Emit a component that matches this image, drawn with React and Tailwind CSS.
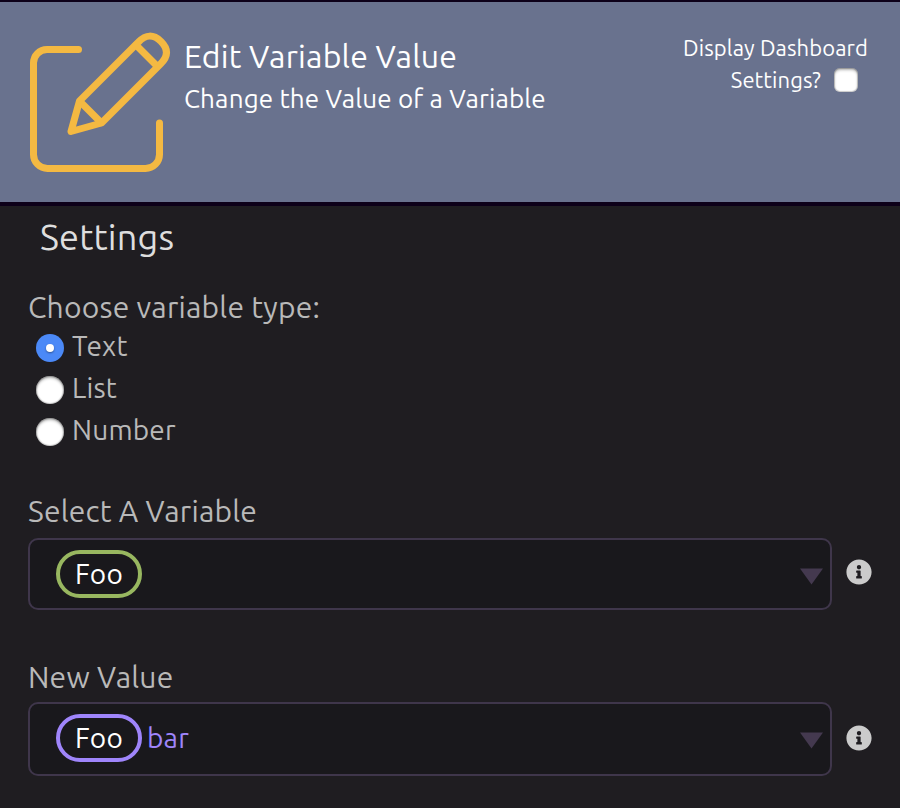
import React from "react";

function EditIcon() {
  return (
    <svg width="144" height="144" viewBox="28 30 144 144" className="block shrink-0" fill="none" stroke="#f4b942" strokeWidth="7" strokeLinecap="round" strokeLinejoin="round">
      <path d="M78.500 49.500H47A13.500 13.500 0 0 0 33.500 63V154.500A14 14 0 0 0 47.500 168.500H145.500A14 14 0 0 0 159.500 154.500V123" />
      <path d="M79.500 101 138.500 42Q149.500 30.500 161 41.500Q172 52.500 160.500 64L101.500 123 71 131.500Z" />
      <path d="M80 101.500 101 122.500M136 45 156.500 65.500" />
    </svg>
  );
}

function InfoIcon() {
  return (
    <svg width="26" height="26" viewBox="0 0 512 512" className="block shrink-0" fill="#cbcbcb">
      <path fillRule="evenodd" d="M256 8C119 8 8 119 8 256s111 248 248 248 248-111 248-248S393 8 256 8zm0 110c23.200 0 42 18.800 42 42s-18.800 42-42 42-42-18.800-42-42 18.800-42 42-42zm56 254c0 6.600-5.400 12-12 12h-88c-6.600 0-12-5.400-12-12v-24c0-6.600 5.400-12 12-12h12v-64h-12c-6.600 0-12-5.400-12-12v-24c0-6.600 5.400-12 12-12h64c6.600 0 12 5.400 12 12v100h12c6.600 0 12 5.400 12 12v24z" />
    </svg>
  );
}

function Radio({ label, checked }) {
  return (
    <label className="flex h-[42px] items-center">
      <span className={checked ? "mt-[3px] flex size-7 items-center justify-center rounded-full bg-[#4b89f7]" : "mt-[3px] size-7 rounded-full bg-white shadow-[inset_0_2px_3px_rgba(0,0,0,0.3),inset_0_0_1px_1px_rgba(0,0,0,0.2)]"}>
        {checked && <span className="size-2 rounded-full bg-white shadow-[0_1px_2px_rgba(0,0,0,0.4)]" />}
      </span>
      <span className="ml-2 text-[28px]">{label}</span>
    </label>
  );
}

function Field({ box, pill, info, children }) {
  return (
    <div className="flex items-center">
      <div className={`flex w-[804px] items-center rounded-[10px] border-2 border-[#3f364b] bg-[#19181c] pl-[26px] pr-[6px] ${box}`}>
        <span className={`flex h-12 w-[86px] items-center justify-center rounded-full border-4 text-[28px] leading-none text-white ${pill}`}>Foo</span>
        {children}
        <svg width="24" height="17" viewBox="0 0 24 17" className="ml-auto mt-1 block">
          <path d="M0 0.500H23L11.500 16.500Z" fill="#44394f" />
        </svg>
      </div>
      <div className={`ml-[14px] ${info}`}>
        <InfoIcon />
      </div>
    </div>
  );
}

export default function App() {
  return (
    <div className="flex h-[808px] w-[900px] flex-col overflow-hidden whitespace-nowrap bg-[#1f1d21] font-[Ubuntu,'Noto_Sans',sans-serif] tracking-[0.2px] text-[#b9b9b9]">
      <header className="flex h-[206px] shrink-0 border-t-2 border-b-4 border-[#0d0019] bg-[#69728e] pl-7 pt-7 text-white">
        <EditIcon />
        <div className="ml-3 pt-1">
          <h1 className="text-[32px] leading-[44px]">Edit Variable Value</h1>
          <p className="mt-px text-[26px] leading-[40px] tracking-[0.17px]">Change the Value of a Variable</p>
        </div>
        <div className="ml-auto mr-8 flex flex-col items-end pt-[2px] text-[22px] leading-8 tracking-[0.1px]">
          <span>Display Dashboard</span>
          <span className="mr-[10px] flex items-center">
            Settings?
            <span className="ml-[13px] size-6 rounded-[6px] bg-white shadow-[inset_0_2px_3px_rgba(0,0,0,0.3),inset_0_0_1px_1px_rgba(0,0,0,0.2)]" />
          </span>
        </div>
      </header>
      <main className="flex flex-col items-start pl-7">
        <h2 className="ml-3 mt-[7px] text-[36px] leading-[48px] text-[#dedede]">Settings</h2>
        <p className="mt-[26px] text-[30px] leading-[40px]">Choose variable type:</p>
        <div className="-mt-[2px] ml-2">
          <Radio label="Text" checked />
          <Radio label="List" />
          <Radio label="Number" />
        </div>
        <p className="mt-[40px] text-[30px] leading-[40px]">Select A Variable</p>
        <div className="mt-[7px]">
          <Field box="h-[72px]" pill="border-[#98b760]" info="-mt-1" />
        </div>
        <p className="mt-[47px] text-[30px] leading-[40px]">New Value</p>
        <div className="mt-[5px]">
          <Field box="h-[74px] pb-[2px]" pill="border-[#9f85fb]" info="-mt-[2px]">
            <span className="ml-[5px] text-[28px] text-[#9f85fb]">bar</span>
          </Field>
        </div>
      </main>
    </div>
  );
}
